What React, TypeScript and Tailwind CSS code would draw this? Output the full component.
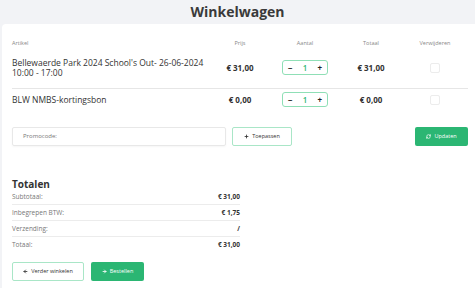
import { ArrowLeft, ArrowRight, Plus, RefreshCw } from 'lucide-react'

const items = [
  {
    name: "Bellewaerde Park 2024 School's Out- 26-06-2024 10:00 - 17:00",
    price: '€ 31,00',
    qty: 1,
    total: '€ 31,00',
  },
  { name: 'BLW NMBS-kortingsbon', price: '€ 0,00', qty: 1, total: '€ 0,00' },
]

const totals = [
  { label: 'Subtotaal:', value: '€ 31,00' },
  { label: 'Inbegrepen BTW:', value: '€ 1,75' },
  { label: 'Verzending:', value: '/' },
  { label: 'Totaal:', value: '€ 31,00' },
]

const cols = 'grid grid-cols-[198px_60px_70px_62px_66px]'

function QtyBox({ qty }: { qty: number }) {
  return (
    <div className="flex h-[15px] w-[46px] items-center justify-between rounded-[3px] border border-[#8fdfb6] px-[5px] text-[8px] font-bold text-[#222]">
      <span>−</span>
      <span className="font-semibold text-[#2bb673]">{qty}</span>
      <span>+</span>
    </div>
  )
}

export default function App() {
  return (
    <div
      className="min-h-[288px] w-[475px] overflow-hidden bg-[#f2f3f6] text-[#333]"
      style={{ fontFamily: '"Open Sans", "Liberation Sans", sans-serif' }}
    >
      <h1 className="pt-[1px] text-center text-[14px] font-bold leading-[22px] text-[#3a3a3a]">
        Winkelwagen
      </h1>

      <div className="ml-[2px] mt-[1px] min-h-[264px] rounded-tl-[4px] bg-white pb-[6px] pl-[10px] pr-[7px] pt-[15px]">
        <div className={`${cols} text-[5.5px] leading-[8px] text-[#888]`}>
          <span>Artikel</span>
          <span className="text-center">Prijs</span>
          <span className="text-center">Aantal</span>
          <span className="text-center">Totaal</span>
          <span className="text-center">Verwijderen</span>
        </div>

        {items.map((item, i) => (
          <div
            key={item.name}
            className={`${cols} items-center ${
              i === 0 ? 'h-[42px] border-b border-[#e6e6e6]' : 'h-[21px]'
            }`}
          >
            <span className="pr-[2px] text-[8.5px] leading-[10px] text-[#333]">
              {item.name}
            </span>
            <span className="text-center text-[8px] font-bold">{item.price}</span>
            <div className="flex justify-center">
              <QtyBox qty={item.qty} />
            </div>
            <span className="text-center text-[8px] font-bold">{item.total}</span>
            <div className="flex justify-center">
              <span className="h-[10px] w-[10px] rounded-[2px] border border-[#ececec]" />
            </div>
          </div>
        ))}

        <div className="mt-[17px] flex h-[19px] items-stretch">
          <div className="flex w-[214px] items-center rounded-[2px] border border-[#e8e8e8] px-[10px] text-[6px] text-[#777] shadow-[0_1px_2px_rgba(0,0,0,0.04)]">
            Promocode:
          </div>
          <button className="ml-[6px] flex w-[60px] items-center justify-center gap-[3px] rounded-[2px] border border-[#a9e6c7] text-[5.5px] text-[#333]">
            <Plus size={5} strokeWidth={4} />
            Toepassen
          </button>
          <button className="ml-auto flex w-[53px] items-center justify-center gap-[3px] rounded-[2px] bg-[#2bb673] text-[5.5px] text-white">
            <RefreshCw size={5} strokeWidth={3} />
            Updaten
          </button>
        </div>

        <h2 className="mt-[31px] text-[10px] font-bold leading-[14px] text-[#333]">
          Totalen
        </h2>
        <div className="w-[228px]">
          {totals.map((t, i) => (
            <div
              key={t.label}
              className={`flex h-[16px] items-center justify-between text-[6.5px] ${
                i < totals.length - 1 ? 'border-b border-[#ececec]' : ''
              } ${i === 0 ? 'mt-[-2px]' : ''}`}
            >
              <span className="text-[#777]">{t.label}</span>
              <span className="font-bold text-[#333]">{t.value}</span>
            </div>
          ))}
        </div>

        <div className="mt-[9px] flex h-[19px] gap-[7px]">
          <button className="flex w-[72px] items-center justify-center gap-[3px] rounded-[2px] border border-[#a9e6c7] text-[5.5px] text-[#333]">
            <ArrowLeft size={5} strokeWidth={4} />
            Verder winkelen
          </button>
          <button className="flex w-[53px] items-center justify-center gap-[3px] rounded-[2px] bg-[#2bb673] text-[5.5px] text-white">
            <ArrowRight size={5} strokeWidth={4} />
            Bestellen
          </button>
        </div>
      </div>
    </div>
  )
}
